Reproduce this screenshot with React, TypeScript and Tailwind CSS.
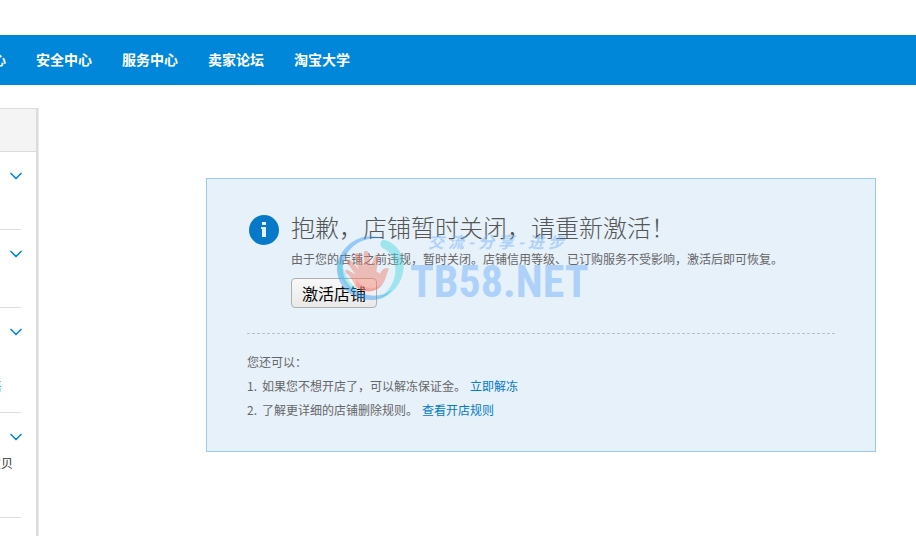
import React from 'react';
import { ChevronDown } from 'lucide-react';

const navItems = ['心', '安全中心', '服务中心', '卖家论坛', '淘宝大学'];

const sections = [
  { id: 'trade', size: 'h-[78px]', label: '', linkStyle: '' },
  { id: 'logistics', size: 'h-[78px]', label: '', linkStyle: '' },
  { id: 'sales', size: 'h-[105px]', label: '售', linkStyle: 'mt-8 -ml-[10px] text-[#0087da]' },
  { id: 'items', size: 'h-[105px]', label: '宝贝', linkStyle: 'mt-1 -ml-[11px] text-[#333333]' },
];

const options = [
  { text: '如果您不想开店了，可以解冻保证金。', link: '立即解冻' },
  { text: '了解更详细的店铺删除规则。', link: '查看开店规则' },
];

function TopNav() {
  return (
    <nav className="flex h-[50px] items-center gap-[30px] overflow-hidden bg-[#0087da] pb-[2px] text-sm font-bold text-white">
      {navItems.map((item) => (
        <a key={item} href="#" className="shrink-0 first:-ml-2">
          {item}
        </a>
      ))}
    </nav>
  );
}

function Sidebar() {
  return (
    <aside className="w-[38px] shrink-0 border-t border-r-2 border-[#dcdcdc] bg-white shadow-[1px_0_0_#eaeaea]">
      <div className="h-[43px] border-b border-[#dcdcdc] bg-[#f4f4f4]" />
      {sections.map((s) => (
        <div key={s.id} className={`${s.size} mr-[15px] border-b border-[#dddddd] pt-[14px]`}>
          <button aria-label="展开" className="ml-[6px] block">
            <ChevronDown className="h-5 w-5 text-[#0087da]" />
          </button>
          {s.label && (
            <a href="#" className={`${s.linkStyle} block leading-6 whitespace-nowrap`}>
              {s.label}
            </a>
          )}
        </div>
      ))}
    </aside>
  );
}

function InfoIcon() {
  return (
    <svg viewBox="0 0 30 30" className="mt-1 ml-[2px] h-[30px] w-[30px] shrink-0">
      <circle cx="15" cy="15" r="15" fill="#0679c9" />
      <rect x="13" y="7" width="4" height="3" fill="#e6f1fa" />
      <path d="M12 12h5v10h-4v-8h-1z" fill="#e6f1fa" />
    </svg>
  );
}

function HandLogo() {
  return (
    <svg viewBox="0 0 240 240" className="h-20 w-20">
      {/* ring */}
      <path
        d="M158 32C104 10 42 42 24 100C8 158 54 216 122 216C149 217 173 203 187 185C158 207 113 210 76 187C41 165 31 127 43 94C60 49 104 24 158 32Z"
        fill="#3f9df0"
        opacity="0.48"
      />
      <path
        d="M159 35C200 42 226 83 220 126C215 170 185 202 143 216C178 190 199 157 196 121C194 92 184 71 157 60C149 52 150 39 159 35Z"
        fill="#3fd3dc"
        opacity="0.42"
      />
      <path d="M24 93C40 102 39 143 69 171C83 184 88 191 79 192C39 174 18 135 24 93Z" fill="#3fd3dc" opacity="0.35" />
      {/* hand */}
      <path
        d="M78 176C69 163 67 151 49 136C42 128 48 122 57 128L76 139L51 104C47 96 56 91 63 98L86 123L74 84C73 74 84 71 89 81L103 116L101 76C102 66 114 66 117 77L122 117L133 87C138 78 147 83 145 94L139 130L150 137C155 123 168 116 177 122C170 134 168 158 153 175C137 195 95 195 78 176Z"
        fill="#f27b66"
        opacity="0.45"
      />
      <path d="M80 151C88 179 122 190 153 171C140 196 96 195 78 176Z" fill="#ef6868" opacity="0.25" />
    </svg>
  );
}

function Watermark() {
  return (
    <div className="pointer-events-none absolute top-[49px] left-[123px] flex" aria-hidden="true">
      <HandLogo />
      <div className="pt-1 text-[#77b3fa] opacity-50">
        <div className="flex gap-1 pl-[18px] text-base leading-[18px] font-bold italic">
          {Array.from('交流-分享-进步').map((char, i) => (
            <span key={i}>{char}</span>
          ))}
        </div>
        <div className="font-['Roboto_Condensed',Roboto,sans-serif] text-[44px] leading-[64px] font-bold">
          TB58.NET
        </div>
      </div>
    </div>
  );
}

export default function App() {
  return (
    <div className="flex min-h-screen flex-col overflow-hidden bg-white pt-[35px] font-['Noto_Sans_CJK_SC',sans-serif] text-xs text-[#666666]">
      <TopNav />
      <div className="flex flex-1 pt-[23px]">
        <Sidebar />
        <main className="flex-1 pt-[70px] pr-10 pl-[168px]">
          <section className="relative border border-[#9acbeb] bg-[#e6f1fa] px-10 pt-8 pb-[29px]">
            <div className="flex gap-3 border-b border-dashed border-[#b4c5bf] pb-[25px]">
              <InfoIcon />
              <div>
                <h1 className="text-2xl leading-8 font-light text-[#555555]">抱歉，店铺暂时关闭，请重新激活！</h1>
                <p className="leading-8">由于您的店铺之前违规，暂时关闭。店铺信用等级、已订购服务不受影响，激活后即可恢复。</p>
                <button className="mt-[3px] block h-[30px] rounded-sm border border-[#b0b0b0] bg-gradient-to-b from-[#f8f8f8] to-[#e9e9e9] px-[10px] text-base leading-7 text-black">
                  激活店铺
                </button>
              </div>
            </div>
            <div className="pt-4 leading-6">
              <p>您还可以：</p>
              <ol>
                {options.map((option, i) => (
                  <li key={option.link} className="flex">
                    <span className="w-[15px]">{i + 1}.</span>
                    <span>{option.text}</span>
                    <a href="#" className="ml-1 text-[#0679c9]">
                      {option.link}
                    </a>
                  </li>
                ))}
              </ol>
            </div>
            <Watermark />
          </section>
        </main>
      </div>
    </div>
  );
}
